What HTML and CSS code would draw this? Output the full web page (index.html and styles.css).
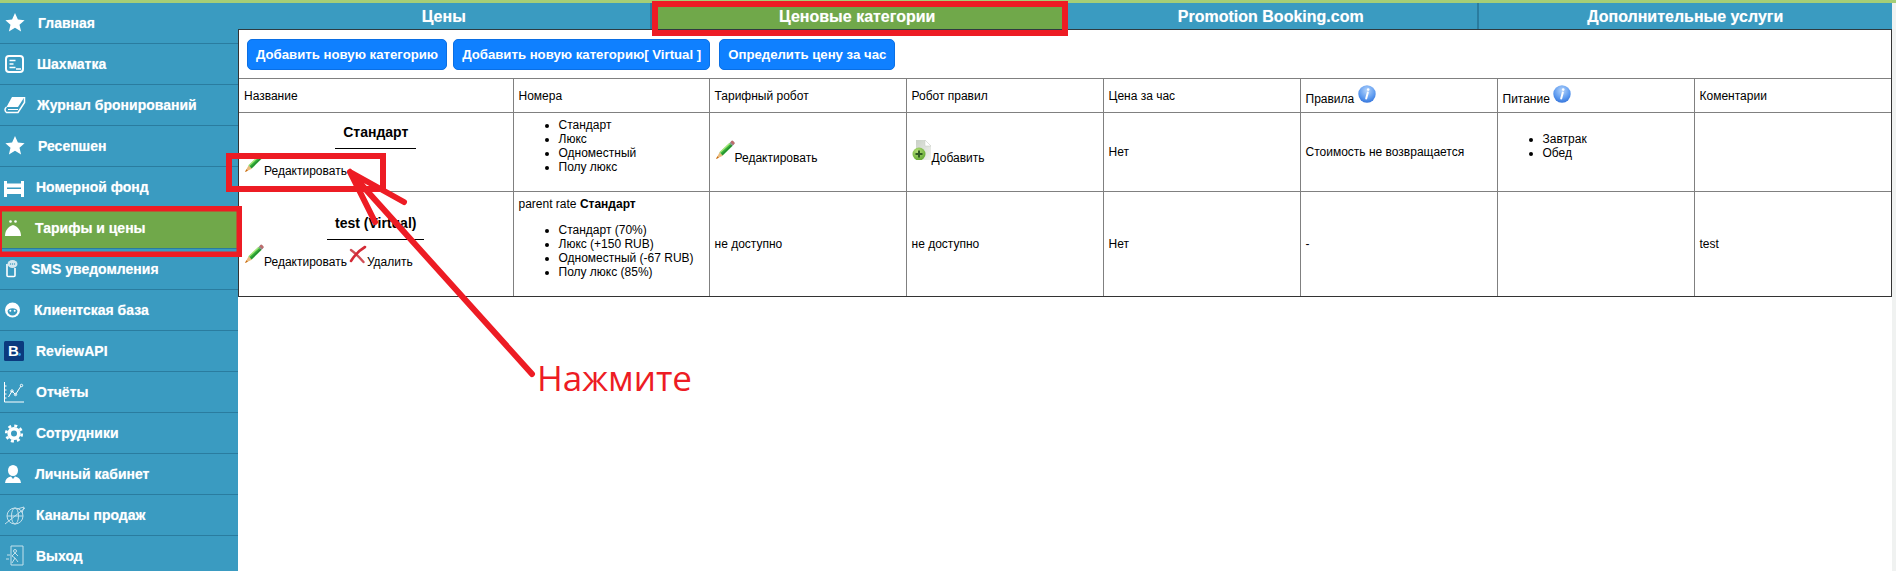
FILE: index.html
```html
<!DOCTYPE html>
<html lang="ru">
<head>
  <meta charset="UTF-8">
  <meta name="viewport" content="width=device-width, initial-scale=1.0">
  <title>Ценовые категории</title>
  <link rel="stylesheet" href="styles.css">
</head>
<body>
  <!-- Иконки таблицы -->
  <svg class="icon-defs" aria-hidden="true">
    <defs>
      <radialGradient id="info-fill" cx="50%" cy="30%" r="75%">
        <stop offset="0" stop-color="#b5d4fb"/>
        <stop offset="0.6" stop-color="#5f9cf0"/>
        <stop offset="1" stop-color="#2f6fd8"/>
      </radialGradient>
      <radialGradient id="plus-fill" cx="40%" cy="30%" r="75%">
        <stop offset="0" stop-color="#b6e07a"/>
        <stop offset="1" stop-color="#5ea52e"/>
      </radialGradient>
      <linearGradient id="page-fill" x1="0" y1="0" x2="1" y2="1">
        <stop offset="0" stop-color="#c9d0c6"/>
        <stop offset="1" stop-color="#f2f3f0"/>
      </linearGradient>
      <symbol id="i-pencil" viewBox="0 0 20 20">
        <path d="M4.500 12.500 14.500 3l3 3-10 9.800z" fill="#35b03a"/>
        <path d="M5 12.500 14.800 3.400" stroke="#a8e878" stroke-width="1.300" fill="none"/>
        <path d="M6.500 15 16.800 5.200" stroke="#1c7a2a" stroke-width="1" fill="none"/>
        <path d="M1 19 4.500 12.500l3.300 3.300z" fill="#e9bb7c"/>
        <path d="M1 19 2.400 16.200l1.500 1.500z" fill="#c86a10"/>
        <path d="M14.500 3 16.400 1.200c.6-.5 1.300-.4 1.800.1l1 1c.5.5.5 1.200 0 1.700L17.500 6z" fill="#8f8f8f"/>
        <path d="M16.400 1.200c.6-.5 1.300-.4 1.800.1l1 1c.5.5.5 1.200 0 1.700l-.8.7-2.800-2.800z" fill="#c26a6a"/>
      </symbol>
      <symbol id="i-add-page" viewBox="0 0 20 20">
        <path d="M4 0h9l6 6v14H4z" fill="url(#page-fill)"/>
        <path d="M13 0v6h6z" fill="#fff" stroke="#c4c9c2" stroke-width=".5"/>
        <circle cx="7" cy="14" r="6.500" fill="url(#plus-fill)"/>
        <path d="M7 10.500v7M3.500 14h7" stroke="#2f5a22" stroke-width="2"/>
      </symbol>
      <symbol id="i-delete" viewBox="0 0 20 20">
        <path d="M4 6Q9 9.500 16.500 18" stroke="#c9303a" stroke-width="2.400" fill="none" stroke-linecap="round" opacity=".85"/>
        <path d="M18 3Q10 7.500 4 17" stroke="#d42a36" stroke-width="2.600" fill="none" stroke-linecap="round"/>
      </symbol>
      <symbol id="i-info" viewBox="0 0 18 18">
        <circle cx="9" cy="9" r="8.700" fill="url(#info-fill)"/>
        <circle cx="10.200" cy="4.600" r="1.300" fill="#fff"/>
        <path d="M9.800 7.500 8.200 13.500" stroke="#fff" stroke-width="2" stroke-linecap="round"/>
      </symbol>
    </defs>
  </svg>

  <div class="top-strip"></div>

  <div class="layout">
    <nav class="sidebar">
      <a class="nav-item">
        <svg class="nav-icon" viewBox="0 0 24 24"><path d="M12 2l2.900 6.600 6.700.6-5.100 4.500 1.600 6.800-6.100-3.700-6.100 3.700 1.600-6.800L2.400 9.200l6.700-.6z" fill="#fff"/></svg>
        <span class="nav-label gap-11">Главная</span>
      </a>
      <a class="nav-item">
        <svg class="nav-icon" viewBox="0 0 24 24" fill="none" stroke="#fff"><rect x="3" y="4" width="17" height="16" rx="3" stroke-width="2"/><path d="M6.500 8.500h6M6.500 12h4M6.500 15.500h6M13 17h5" stroke-width="1.500"/></svg>
        <span class="nav-label gap-10">Шахматка</span>
      </a>
      <a class="nav-item">
        <svg class="nav-icon" viewBox="0 0 24 24"><path d="M9 4h12.500L15 14H3.500z" fill="#fff"/><path d="M3.500 14c-2 1.500-2 4 0 5.500H15l6.500-10V4" fill="none" stroke="#fff" stroke-width="1.500"/><path d="M5 16.500h10" stroke="#fff"/></svg>
        <span class="nav-label gap-10">Журнал бронирований</span>
      </a>
      <a class="nav-item">
        <svg class="nav-icon" viewBox="0 0 24 24"><path d="M12 2l2.900 6.600 6.700.6-5.100 4.500 1.600 6.800-6.100-3.700-6.100 3.700 1.600-6.800L2.400 9.200l6.700-.6z" fill="#fff"/></svg>
        <span class="nav-label gap-11">Ресепшен</span>
      </a>
      <a class="nav-item">
        <svg class="nav-icon" viewBox="0 0 24 24"><path d="M1 6h3v16H1zM18 6h3v16h-3zM4 8.500h14v4H4zM4 14h14v5H4z" fill="#fff"/></svg>
        <span class="nav-label gap-9">Номерной фонд</span>
      </a>
      <a class="nav-item nav-item-active">
        <svg class="nav-icon" viewBox="0 0 24 24"><path d="M2 20c0-5 2.500-9 8-11 5.500 2 8 6 8 11z" fill="#fff"/><circle cx="7.500" cy="5.500" r="1.300" fill="#fff"/><circle cx="12.500" cy="5.500" r="1.300" fill="#fff"/></svg>
        <span class="nav-label gap-8">Тарифы и цены</span>
      </a>
      <a class="nav-item">
        <svg class="nav-icon" viewBox="0 0 24 24"><path d="M4 7v11.500a1 1 0 0 0 1 1h6a1 1 0 0 0 1-1V11" fill="none" stroke="#fff" stroke-width="1.600"/><ellipse cx="9.500" cy="7" rx="5" ry="4" fill="#d5e8ef"/><circle cx="7.500" cy="7" r=".7" fill="#3a9bc1"/><circle cx="9.500" cy="7" r=".7" fill="#3a9bc1"/><circle cx="11.500" cy="7" r=".7" fill="#3a9bc1"/></svg>
        <span class="nav-label gap-4">SMS уведомления</span>
      </a>
      <a class="nav-item">
        <svg class="nav-icon" viewBox="0 0 24 24"><circle cx="9.500" cy="12" r="7.500" fill="#fff"/><path d="M4.500 13c.8-2 2-2.800 5-2.800s4.200.8 5 2.800c-.4 2.800-2.400 4.500-5 4.500s-4.600-1.700-5-4.500z" fill="#3a9bc1"/><circle cx="7.300" cy="12.800" r="1" fill="#fff"/><circle cx="11.700" cy="12.800" r="1" fill="#fff"/></svg>
        <span class="nav-label gap-7">Клиентская база</span>
      </a>
      <a class="nav-item">
        <svg class="nav-icon" viewBox="0 0 24 24"><rect x="1" y="2" width="20" height="20" rx="1.500" fill="#0b3a7e"/><text class="brand-letter" x="5" y="17">B</text><circle cx="16.500" cy="15.500" r="1.400" fill="#2f9fe0"/></svg>
        <span class="nav-label gap-9">ReviewAPI</span>
      </a>
      <a class="nav-item">
        <svg class="nav-icon" viewBox="0 0 24 24" fill="none" stroke="#fff"><path d="M1.500 2v20H21M1.500 6h2M1.500 10h2M1.500 14h2M1.500 18h2"/><path d="M5.500 17 9 11l3.500 3.500L18 6"/><circle cx="9" cy="11" r="1.200"/><circle cx="12.500" cy="14.500" r="1.200"/><circle cx="18.500" cy="5.500" r="1.200"/></svg>
        <span class="nav-label gap-9">Отчёты</span>
      </a>
      <a class="nav-item">
        <svg class="nav-icon" viewBox="0 0 24 24" fill="none" stroke="#fff"><circle cx="11" cy="12.500" r="4.800" stroke-width="3.600"/><circle cx="11" cy="12.500" r="7.800" stroke-width="2.600" stroke-dasharray="3 3.130"/></svg>
        <span class="nav-label gap-9">Сотрудники</span>
      </a>
      <a class="nav-item">
        <svg class="nav-icon" viewBox="0 0 24 24"><ellipse cx="10" cy="8.500" rx="5" ry="5.500" fill="#fff"/><path d="M2 21c.5-4 2.500-6 6-6.500l2 2.500 2-2.500c3.500.5 5.500 2.500 6 6.500z" fill="#fff"/></svg>
        <span class="nav-label gap-8">Личный кабинет</span>
      </a>
      <a class="nav-item">
        <svg class="nav-icon nav-icon-faint" viewBox="0 0 24 24" fill="none" stroke="#fff"><circle cx="12" cy="13" r="8"/><ellipse cx="12" cy="13" rx="3.500" ry="8"/><path d="M4 13h16M2 21 22 5M14 6l7-2-2 6"/></svg>
        <span class="nav-label gap-9">Каналы продаж</span>
      </a>
      <a class="nav-item">
        <svg class="nav-icon nav-icon-faint" viewBox="0 0 24 24" fill="none" stroke="#fff"><path d="M8 2h12v19H8z"/><circle cx="12" cy="7" r="1.500"/><path d="M12 9l-3 3 3 2-3 5M12 9l3 3M12 14l3 4M4 11h3M3 15h3"/></svg>
        <span class="nav-label gap-9">Выход</span>
      </a>
    </nav>

    <main class="panel">
      <div class="tabs">
        <a class="tab">Цены</a>
        <a class="tab tab-active">Ценовые категории</a>
        <a class="tab">Promotion Booking.com</a>
        <a class="tab">Дополнительные услуги</a>
      </div>

      <div class="toolbar">
        <button class="btn" type="button">Добавить новую категорию</button>
        <button class="btn" type="button">Добавить новую категорию[ Virtual ]</button>
        <button class="btn btn-last" type="button">Определить цену за час</button>
      </div>

      <table class="rates">
        <colgroup>
          <col class="col-name">
          <col class="col-rooms">
          <col span="6">
        </colgroup>
        <tr class="row-head">
          <td>Название</td>
          <td>Номера</td>
          <td>Тарифный робот</td>
          <td>Робот правил</td>
          <td>Цена за час</td>
          <td>Правила <svg class="icon-info"><use href="#i-info"/></svg></td>
          <td>Питание <svg class="icon-info"><use href="#i-info"/></svg></td>
          <td>Коментарии</td>
        </tr>
        <tr class="row-base">
          <td class="cell-rate">
            <div class="rate-title"><span class="rate-name">Стандарт</span></div>
            <a class="link"><svg class="icon"><use href="#i-pencil"/></svg>Редактировать</a>
          </td>
          <td>
            <ul class="list">
              <li>Стандарт</li>
              <li>Люкс</li>
              <li>Одноместный</li>
              <li>Полу люкс</li>
            </ul>
          </td>
          <td><a class="link"><svg class="icon"><use href="#i-pencil"/></svg>Редактировать</a></td>
          <td><a class="link"><svg class="icon"><use href="#i-add-page"/></svg>Добавить</a></td>
          <td>Нет</td>
          <td>Стоимость не возвращается</td>
          <td>
            <ul class="list">
              <li>Завтрак</li>
              <li>Обед</li>
            </ul>
          </td>
          <td></td>
        </tr>
        <tr class="row-virtual">
          <td class="cell-rate">
            <div class="rate-title"><span class="rate-name">test (Virtual)</span></div>
            <a class="link"><svg class="icon"><use href="#i-pencil"/></svg>Редактировать</a><a class="link"><svg class="icon"><use href="#i-delete"/></svg>Удалить</a>
          </td>
          <td>
            <div class="parent-rate">parent rate <b>Стандарт</b></div>
            <ul class="list">
              <li>Стандарт (70%)</li>
              <li>Люкс (+150 RUB)</li>
              <li>Одноместный (-67 RUB)</li>
              <li>Полу люкс (85%)</li>
            </ul>
          </td>
          <td>не доступно</td>
          <td>не доступно</td>
          <td>Нет</td>
          <td>-</td>
          <td></td>
          <td>test</td>
        </tr>
      </table>
    </main>

    <div class="page-edge"></div>
  </div>

  <!-- Пометки поверх скриншота -->
  <svg class="marks" viewBox="0 0 1896 571" fill="none" stroke="#ed1c24" aria-hidden="true">
    <rect x="-0.750" y="208.750" width="240" height="45.500" stroke-width="5.500"/>
    <rect x="655" y="4" width="410" height="29" stroke-width="6"/>
    <rect x="229" y="156" width="154" height="33" stroke-width="6"/>
    <path d="M532 374 350 172M350 172 404 202M350 172 375 222" stroke-width="6" stroke-linecap="round"/>
  </svg>
  <div class="mark-label">Нажмите</div>
</body>
</html>
```

FILE: styles.css
```css
html, body { margin: 0; height: 100%; overflow: hidden; }
body { font-family: "Liberation Sans", Arial, sans-serif; font-size: 12px; color: #000; background: #fff; position: relative; }
.icon-defs { position: absolute; width: 0; height: 0; }

.top-strip { height: 3px; background: #a6ce76; }
.layout { display: flex; height: 568px; }

/* Меню слева */
.sidebar { width: 238px; flex: none; background: #3a9bc1; overflow: hidden; }
.nav-item { display: flex; align-items: center; height: 40px; padding-left: 3px; border-bottom: 1px solid #2a7c9f; }
.nav-item-active { background: #70a84a; }
.nav-icon { width: 24px; height: 24px; flex: none; }
.nav-icon-faint { opacity: 0.7; }
.nav-label { color: #fff; font-size: 14px; font-weight: bold; text-shadow: 0 0 1px rgba(255,255,255,0.5); }
.brand-letter { fill: #fff; font-size: 15px; font-weight: bold; font-family: "Liberation Sans", Arial, sans-serif; }
.gap-4 { margin-left: 4px; }
.gap-7 { margin-left: 7px; }
.gap-8 { margin-left: 8px; }
.gap-9 { margin-left: 9px; }
.gap-10 { margin-left: 10px; }
.gap-11 { margin-left: 11px; }

/* Основная часть */
.panel { flex: 1; min-width: 0; align-self: flex-start; border: 1px solid #333; border-top: 0; }
.page-edge { width: 4px; flex: none; background: #f0f2f1; }

.tabs { display: grid; grid-template-columns: repeat(4, 1fr); height: 27px; margin: 0 -1px; border-bottom: 1px solid #2f3b40; box-sizing: border-box; }
.tab { display: flex; align-items: center; justify-content: center; padding-top: 2px; background: #3a9bc1; color: #fff; font-size: 16px; font-weight: bold; border-right: 2px solid #2a7c9f; text-shadow: 0 0 1px rgba(255,255,255,0.4); }
.tab:last-child { border-right: 0; }
.tab-active { background: #70a84a; }

.toolbar { display: flex; padding: 9px 8px 8px; }
.btn { height: 31px; padding: 0 8px; margin-right: 6px; background: #0f80ff; color: #fff; border: 1px solid #0a6fe4; border-radius: 5px; font-family: "Liberation Sans", Arial, sans-serif; font-size: 13.2px; font-weight: bold; }
.btn-last { margin-left: 3px; }

.rates { width: 100%; table-layout: fixed; border-collapse: collapse; }
.col-name { width: 274px; }
.col-rooms { width: 196px; }
.rates td { padding: 0 5px; border: 1px solid #808080; vertical-align: middle; }
.rates td.cell-rate { padding-bottom: 3px; }
.rates tr td:first-child { border-left: 0; }
.rates tr td:last-child { border-right: 0; }
.rates tr:last-child td { border-bottom: 0; }
.row-head { height: 34px; }
.row-base { height: 79px; }
.row-virtual { height: 104px; }

.rate-title { text-align: center; margin-bottom: 4px; }
.rate-name { display: inline-block; padding: 0 8px 8px; font-size: 14px; font-weight: bold; border-bottom: 1px solid #000; }
.link { color: #000; }
.icon { width: 20px; height: 20px; vertical-align: 2px; }
.icon-info { width: 18px; height: 18px; vertical-align: 0; }
.list { margin: 0 0 12px; padding-left: 40px; line-height: 14px; }
.parent-rate { line-height: 14px; margin-bottom: 12px; }

.marks { position: absolute; top: 0; left: 0; width: 1896px; height: 571px; pointer-events: none; }
.mark-label { position: absolute; left: 537px; top: 353px; font-family: "Open Sans", sans-serif; font-size: 35px; line-height: 49px; color: #ed1c24; }
```
